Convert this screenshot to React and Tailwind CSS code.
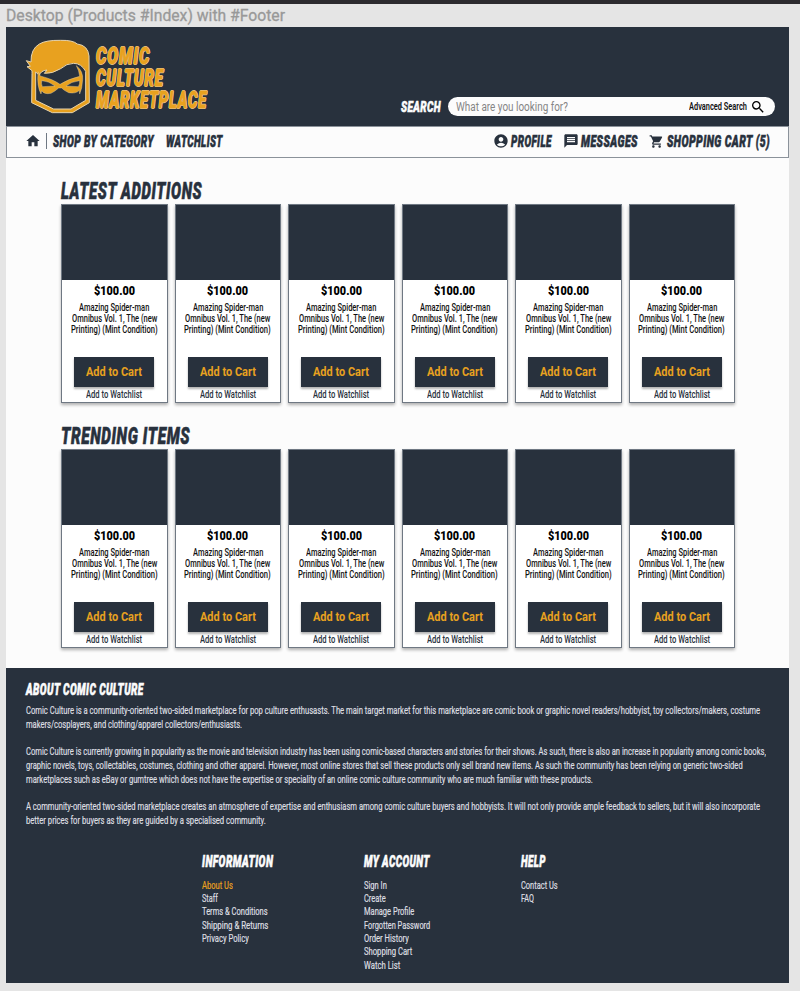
import React, { useLayoutEffect, useRef } from "react";
import { MdHome, MdAccountCircle, MdMessage, MdShoppingCart, MdSearch } from "react-icons/md";

// Single line of text condensed or widened to fill its box.
function Fit({ className = "", children }) {
  const box = useRef(null);
  const line = useRef(null);
  useLayoutEffect(() => {
    const scale = box.current.clientWidth / line.current.offsetWidth;
    line.current.style.transform = `scaleX(${scale})`;
  }, []);
  return (
    <div className={`shrink-0 whitespace-nowrap ${className}`}>
      <div ref={box} className="w-full">
        <span ref={line} className="inline-block origin-left align-top">{children}</span>
      </div>
    </div>
  );
}

const comic = "font-black italic";
const heavy = "tracking-[0.04em] [-webkit-text-stroke:0.6px_currentColor]";
const outlined = "h-[22px] leading-[22px] tracking-[0.05em] [-webkit-text-stroke:0.8px_currentColor] [text-shadow:1px_0_0.5px_#e4d3b0,-1px_0_0.5px_#e4d3b0,0_1px_0.5px_#e4d3b0,0_-1px_0.5px_#e4d3b0]";

function Logo() {
  return (
    <svg viewBox="0 0 240 252" className="h-[84px] w-20 shrink-0">
      <g fill="#e8a11f" stroke="#e4d3b0" strokeWidth="3" strokeLinejoin="round">
        <path
          fillRule="evenodd"
          d="M36 118 L36 110 L21 98 L31 97 L19 80 L33 84 Q32 45 58 30 Q78 18 122 19 Q158 18 172 30 Q204 34 207 66 L208 206 L157 236 L97 236 L35 206 Z M47 114 L47 199 L101 225 L153 225 L197 199 L197 112 Q184 88 161 88 Q140 88 122 104 Q96 120 73 118 L81 108 Q62 110 58 124 Z"
        />
        <path
          strokeWidth="1.2"
          fillRule="evenodd"
          d="M54 113 L61 126 Q98 135 120 151 Q145 135 179 127 Q177 109 169 95 Q190 111 188 137 L185 162 L179 180 L178 169 Q168 180 146 176 Q132 170 125 162 L116 162 Q105 172 93 178 Q72 182 65 170 L63 180 Q50 157 54 113 Z M65 140 Q63 149 67 158 L105 156 Q87 141 65 140 Z M179 140 Q153 143 138 156 L175 158 Q180 150 179 140 Z"
        />
      </g>
    </svg>
  );
}

function Card() {
  return (
    <div className="flex h-[199px] flex-col items-center border border-[#6f7883] bg-white text-black shadow-[0_2px_3px_rgba(0,0,0,0.3)]">
      <div className="h-[75px] w-full shrink-0 bg-[#28313d]" />
      <Fit className="mt-[2px] h-4 w-[41px] text-[13.5px] leading-4 font-black">$100.00</Fit>
      <div className="mt-1 flex flex-col items-center text-[10.5px] leading-[11px] font-medium text-[#111]">
        <Fit className="h-[11px] w-[70px]">Amazing Spider-man</Fit>
        <Fit className="h-[11px] w-[85px]">Omnibus Vol. 1, The (new</Fit>
        <Fit className="h-[11px] w-[87px]">Printing) (Mint Condition)</Fit>
      </div>
      <div className="mt-[22px] flex h-[30px] w-20 shrink-0 items-start justify-center bg-[#28313d] pt-[6px] text-[#e8a11f] shadow-[0_2px_2px_rgba(0,0,0,0.3)]">
        <Fit className="h-4 w-[56px] text-[13.5px] leading-4 font-bold">Add to Cart</Fit>
      </div>
      <Fit className="mt-[2px] h-3 w-14 text-[10.5px] leading-3 font-medium text-[#28313d]">Add to Watchlist</Fit>
    </div>
  );
}

function Section({ title, width }) {
  return (
    <section className="h-[245px]">
      <Fit className={`${comic} ${heavy} ${width} h-7 pt-px text-[24px] leading-7 text-[#28313d]`}>{title}</Fit>
      <div className="grid w-[674px] grid-cols-6 gap-[7px]">
        {[0, 1, 2, 3, 4, 5].map((i) => <Card key={i} />)}
      </div>
    </section>
  );
}

const paragraphs = [
  [
    ["w-[734px]", "Comic Culture is a community-oriented two-sided marketplace for pop culture enthusasts. The main target market for this marketplace are comic book or graphic novel readers/hobbyist, toy collectors/makers, costume"],
    ["w-[216px]", "makers/cosplayers, and clothing/apparel collectors/enthusiasts."],
  ],
  [
    ["w-[740px]", "Comic Culture is currently growing in popularity as the movie and television industry has been using comic-based characters and stories for their shows. As such, there is also an increase in popularity among comic books,"],
    ["w-[717px]", "graphic novels, toys, collectables, costumes, clothing and other apparel. However, most online stores that sell these products only sell brand new items. As such the community has been relying on generic two-sided"],
    ["w-[567px]", "marketplaces such as eBay or gumtree which does not have the expertise or speciality of an online comic culture community who are much familiar with these products."],
  ],
  [
    ["w-[734px]", "A community-oriented two-sided marketplace creates an atmosphere of expertise and enthusiasm among comic culture buyers and hobbyists. It will not only provide ample feedback to sellers, but it will also incorporate"],
    ["w-[240px]", "better prices for buyers as they are guided by a specialised community."],
  ],
];

const columns = [
  ["w-[162px]", "w-[71px]", "INFORMATION", [
    ["w-[31px]", "About Us"], ["w-[16px]", "Staff"], ["w-[66px]", "Terms & Conditions"],
    ["w-[66px]", "Shipping & Returns"], ["w-[47px]", "Privacy Policy"],
  ]],
  ["w-[156.5px]", "w-[66px]", "MY ACCOUNT", [
    ["w-[23px]", "Sign In"], ["w-[22px]", "Create"], ["w-[50px]", "Manage Profile"],
    ["w-[66px]", "Forgotten Password"], ["w-[45px]", "Order History"],
    ["w-[48px]", "Shopping Cart"], ["w-[36px]", "Watch List"],
  ]],
  ["w-[100px]", "w-[25px]", "HELP", [["w-[37px]", "Contact Us"], ["w-[13px]", "FAQ"]]],
];

export default function App() {
  return (
    <div className="flex h-[991px] w-[800px] flex-col overflow-hidden bg-[#e5e5e5] font-[Roboto,sans-serif]">
      <div className="h-1 shrink-0 bg-[#2c2a2e]" />
      <div className="h-[23px] shrink-0 pt-[1px] pl-[6px]">
        <Fit className="w-[279px] text-base leading-[22px] text-[#999] [-webkit-text-stroke:0.3px_#999]">Desktop (Products #Index) with #Footer</Fit>
      </div>

      <main className="ml-[6px] flex h-[956px] w-[783px] shrink-0 flex-col bg-[#fcfcfc]">
        <header className="flex h-[99px] shrink-0 bg-[#28313d] pl-[14px]">
          <div className="pt-[7px]"><Logo /></div>
          <div className={`${comic} -ml-1 flex flex-col pt-[18px] text-[23.5px] text-[#e8a11f]`}>
            <Fit className={`${outlined} w-[54px]`}>COMIC</Fit>
            <Fit className={`${outlined} w-[68px]`}>CULTURE</Fit>
            <Fit className={`${outlined} w-[111px]`}>MARKETPLACE</Fit>
          </div>
          <div className="mt-[70px] mr-[14px] ml-auto flex h-[19px] items-center">
            <Fit className={`${comic} ${heavy} mr-[7px] h-5 w-[40px] text-[15.5px] leading-5 text-[#fcfcfc]`}>SEARCH</Fit>
            <div className="flex h-[19px] w-[327px] items-center rounded-full bg-[#fcfcfc] pr-[9px] pl-2">
              <Fit className="h-4 w-[112px] text-[12.5px] leading-4 text-[#858585]">What are you looking for?</Fit>
              <Fit className="ml-auto h-4 w-[58px] text-[10.5px] leading-4 font-semibold text-[#111]">Advanced Search</Fit>
              <MdSearch className="ml-[3px] h-4 w-4 shrink-0 text-black" />
            </div>
          </div>
        </header>

        <nav className={`${comic} flex h-8 shrink-0 items-start border border-[#8b929a] pt-[5px] pr-[18px] pl-[18px] text-[16.5px] leading-5 text-[#28313d]`}>
          <MdHome className="mt-px h-4 w-4 shrink-0" />
          <div className="mt-[1px] mr-[6px] ml-[5px] h-4 w-px bg-[#6f7883]" />
          <Fit className={`${heavy} h-5 w-[101px]`}>SHOP BY CATEGORY</Fit>
          <Fit className={`${heavy} ml-3 h-5 w-[57px]`}>WATCHLIST</Fit>
          <MdAccountCircle className="mt-px ml-auto h-4 w-4 shrink-0" />
          <Fit className={`${heavy} ml-[2px] h-5 w-[41px]`}>PROFILE</Fit>
          <MdMessage className="mt-px ml-[11px] h-4 w-4 shrink-0" />
          <Fit className={`${heavy} ml-[2px] h-5 w-[57px]`}>MESSAGES</Fit>
          <MdShoppingCart className="mt-[2px] ml-[11px] h-[15px] w-[15px] shrink-0" />
          <Fit className={`${heavy} ml-[3px] h-5 w-[103px]`}>SHOPPING CART (5)</Fit>
        </nav>

        <div className="h-[510px] shrink-0 pt-[18px] pl-[55px]">
          <Section title="LATEST ADDITIONS" width="w-[141px]" />
          <Section title="TRENDING ITEMS" width="w-[129px]" />
        </div>

        <footer className="h-[315px] shrink-0 bg-[#28313d] pt-[11px] pl-5 text-[11px] text-[#dedfe1]">
          <Fit className={`${comic} ${heavy} h-5 w-[118px] pt-px text-[16px] leading-5 text-[#fcfcfc]`}>ABOUT COMIC CULTURE</Fit>
          <div className="mt-[5px] flex flex-col gap-[14px] leading-[13.7px] [-webkit-text-stroke:0.2px_currentColor]">
            {paragraphs.map((lines, i) => (
              <div key={i}>
                {lines.map(([w, t]) => <Fit key={t} className={`h-[13.7px] ${w}`}>{t}</Fit>)}
              </div>
            ))}
          </div>
          <div className="mt-[24px] flex pl-[176px]">
            {columns.map(([cw, w, title, links]) => (
              <div key={title} className={cw}>
                <Fit className={`${comic} ${heavy} ${w} mb-[7px] h-5 text-[16px] leading-5 text-[#fcfcfc]`}>{title}</Fit>
                {links.map(([lw, t]) => (
                  <Fit key={t} className={`h-[13.3px] text-[10.5px] leading-[13.3px] [-webkit-text-stroke:0.2px_currentColor] ${lw} ${t === "About Us" ? "text-[#e8a11f]" : ""}`}>{t}</Fit>
                ))}
              </div>
            ))}
          </div>
        </footer>
      </main>
    </div>
  );
}
